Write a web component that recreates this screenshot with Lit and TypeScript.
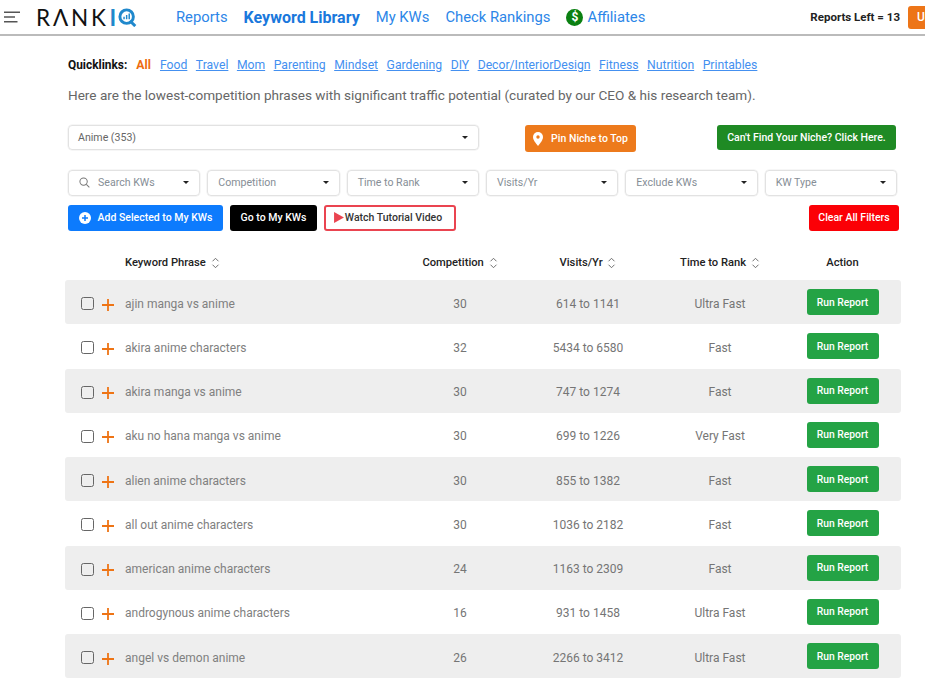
import { LitElement, html, css, svg } from "lit";
import { customElement } from "lit/decorators.js";

const QUICKLINKS = ["Food", "Travel", "Mom", "Parenting", "Mindset", "Gardening", "DIY", "Decor/InteriorDesign", "Fitness", "Nutrition", "Printables"];
const FILTERS = ["Search KWs", "Competition", "Time to Rank", "Visits/Yr", "Exclude KWs", "KW Type"];
const ROWS = [
  ["ajin manga vs anime", "30", "614 to 1141", "Ultra Fast"],
  ["akira anime characters", "32", "5434 to 6580", "Fast"],
  ["akira manga vs anime", "30", "747 to 1274", "Fast"],
  ["aku no hana manga vs anime", "30", "699 to 1226", "Very Fast"],
  ["alien anime characters", "30", "855 to 1382", "Fast"],
  ["all out anime characters", "30", "1036 to 2182", "Fast"],
  ["american anime characters", "24", "1163 to 2309", "Fast"],
  ["androgynous anime characters", "16", "931 to 1458", "Ultra Fast"],
  ["angel vs demon anime", "26", "2266 to 3412", "Ultra Fast"],
];

const sortIcon = svg`<svg class="sort" viewBox="0 0 10 14" width="9" height="12" fill="none" stroke="#666" stroke-width="1.1"><path d="M1.5 5 5 1.5 8.500 5M1.500 9 5 12.500 8.500 9"/></svg>`;

@customElement("app-root")
export class AppRoot extends LitElement {
  static styles = css`
    :host {
      display: block;
      width: 925px;
      height: 681px;
      overflow: hidden;
      background: #fff;
      font-family: Roboto, "Liberation Sans", sans-serif;
      color: #757575;
    }
    header {
      display: flex;
      align-items: center;
      height: 34px;
      border-bottom: 2px solid #bbb;
      white-space: nowrap;
    }
    .burger { margin-left: 4px; width: 16px; }
    .burger, .logo, nav a { flex: none; }
    .logo {
      display: flex;
      align-items: center;
      margin-left: 16px;
      width: 102px;
      font-family: Lato, sans-serif;
      font-weight: 400;
      font-size: 22.5px;
      color: #111;
      letter-spacing: 2.8px;
    }
    .logo b { font-weight: 700; color: #2088cc; margin: 0 2px 0 1px; letter-spacing: 0; }
    .logo svg { flex: none; }
    nav { display: flex; align-items: center; gap: 16px; margin-left: 38px; font-size: 14.8px; }
    nav a { color: #2c86e8; }
    nav a.on { font-weight: 700; font-size: 16px; color: #1a78dc; }
    .aff { display: flex; align-items: center; gap: 4px; }
    .coin {
      width: 17px;
      height: 17px;
      border-radius: 50%;
      background: #0b8012;
      color: #fff;
      font-size: 12px;
      font-weight: 700;
      line-height: 17px;
      text-align: center;
    }
    .left { margin-left: auto; font-size: 11.5px; font-weight: 700; color: #222; }
    .up {
      flex: none;
      margin-left: 8px;
      margin-right: -30px;
      width: 47px;
      height: 23px;
      padding-left: 9px;
      box-sizing: border-box;
      border-radius: 3px;
      background: #ed7518;
      color: #fff;
      font-size: 12px;
      font-weight: 500;
      line-height: 23px;
    }
    main { padding: 22px 28px 0 68px; }
    .quick { display: flex; gap: 8.5px; font-size: 12.2px; line-height: 15px; color: #4490f0; }
    .quick b { color: #111; font-size: 11.9px; margin-right: 0.5px; }
    .quick strong { color: #ee6c10; margin-right: 0.5px; }
    .quick a { text-decoration: underline; }
    .lead { margin: 14px 0 0; font-size: 13.57px; line-height: 17px; color: #666; white-space: nowrap; }
    .niche { display: flex; align-items: flex-start; margin-top: 21px; height: 28px; }
    .select {
      display: flex;
      align-items: center;
      justify-content: space-between;
      box-sizing: border-box;
      height: 26px;
      padding: 0 10px 1px;
      border: 1px solid #e2e2e2;
      border-radius: 4px;
      font-size: 10.6px;
      color: #868e96;
      box-shadow: 0 0 0 0.5px #eee;
    }
    .select.big { width: 411px; height: 25px; padding-left: 9px; color: #666; }
    .select i { width: 0; height: 0; border: 3px solid transparent; border-top: 3.5px solid #222; border-bottom: 0; }
    .filters { display: grid; grid-template-columns: repeat(6, 1fr); gap: 7px; margin-top: 17px; }
    .search { flex: 1; display: flex; align-items: center; gap: 8px; }
    .search svg { flex: none; }
    .btn {
      display: inline-flex;
      align-items: center;
      justify-content: center;
      box-sizing: border-box;
      border-radius: 3px;
      color: #fff;
      font-size: 10.5px;
      font-weight: 500;
      white-space: nowrap;
    }
    .pin { width: 111px; height: 27px; margin-left: 46px; background: #ed7a1c; gap: 8px; }
    .cant { width: 179px; height: 25px; margin-left: auto; margin-right: 1px; background: #1f8a24; }
    .actions { display: flex; gap: 7px; margin-top: 9px; margin-right: -2px; }
    .actions .btn { height: 26px; padding-bottom: 1px; }
    .add { width: 155px; background: #0d7bfd; gap: 7px; }
    .go { width: 87px; background: #000; }
    .watch { width: 132px; background: #fff; border: 2px solid #ea4450; color: #333; gap: 1px; padding-right: 4px; }
    .clear { width: 90px; margin-left: auto; background: #fb0006; }
    .table { margin: 0 -4px 0 -3px; }
    .row {
      display: grid;
      grid-template-columns: 60px 275px 120px 136px 128px 117px;
      align-items: center;
      box-sizing: border-box;
      height: 44.25px;
      padding-top: 3px;
      border-radius: 3px;
      font-size: 12px;
    }
    .row > div { text-align: center; }
    .row > .kw { text-align: left; color: #808080; }
    .head { height: 49px; padding-top: 14px; font-weight: 500; font-size: 11.2px; color: #222; }
    .head > .kw { color: #222; }
    .head .sort { vertical-align: -2.5px; margin-left: 2px; }
    .row.even { background: #eee; }
    .tick { display: flex; align-items: center; padding-left: 16px; gap: 8px; }
    .box { width: 11px; height: 11px; border: 1.5px solid #666; border-radius: 2.5px; }
    .plus { margin-top: 2px; }
    .run { width: 72px; height: 26px; margin-top: -3px; background: #24a345; font-size: 10.3px; }
  `;

  render() {
    return html`
      <header>
        <svg class="burger" viewBox="0 0 16 12" height="12">
          <path d="M0 1.200h16M0 6h11M0 10.800h13.500" stroke="#555" stroke-width="1.600"/>
        </svg>
        <div class="logo">
          RΛNK<b>I</b>
          <svg viewBox="0 0 22 22" width="19" height="19">
            <circle cx="10" cy="10" r="7.800" fill="none" stroke="#2088cc" stroke-width="3.400"/>
            <path d="M14 15l6 6" stroke="#2088cc" stroke-width="3.400"/>
            <path d="M7 10v3M10 8v5M13 6.500v6.500" stroke="#2088cc" stroke-width="1.700"/>
          </svg>
        </div>
        <nav>
          <a>Reports</a>
          <a class="on">Keyword Library</a>
          <a>My KWs</a>
          <a>Check Rankings</a>
          <a class="aff"><span class="coin">$</span>Affiliates</a>
        </nav>
        <span class="left">Reports Left = 13</span>
        <span class="up">Upgrade</span>
      </header>
      <main>
        <div class="quick">
          <b>Quicklinks:</b>
          <strong>All</strong>
          ${QUICKLINKS.map((q) => html`<a>${q}</a>`)}
        </div>
        <p class="lead">Here are the lowest-competition phrases with significant traffic potential (curated by our CEO &amp; his research team).</p>
        <div class="niche">
          <div class="select big">Anime (353)<i></i></div>
          <div class="btn pin">
            <svg viewBox="0 0 10 14" width="10" height="14">
              <path d="M5 0a5 5 0 0 1 5 5c0 3.500-5 9-5 9S0 8.500 0 5a5 5 0 0 1 5-5z" fill="#fff"/>
              <circle cx="5" cy="5" r="1.700" fill="#ed7a1c"/>
            </svg>
            Pin Niche to Top
          </div>
          <div class="btn cant">Can't Find Your Niche? Click Here.</div>
        </div>
        <div class="filters">
          ${FILTERS.map((f, i) => html`
            <div class="select">
              ${i === 0
                ? html`<span class="search">
                    <svg viewBox="0 0 12 12" width="11" height="11" fill="none" stroke="#777" stroke-width="1.100"><circle cx="5" cy="5" r="4"/><path d="M8 8l3.300 3.300"/></svg>
                    ${f}
                  </span>`
                : f}
              <i></i>
            </div>`)}
        </div>
        <div class="actions">
          <div class="btn add">
            <svg viewBox="0 0 12 12" width="12" height="12">
              <circle cx="6" cy="6" r="6" fill="#fff"/>
              <path d="M6 3v6M3 6h6" stroke="#0d7bfd" stroke-width="1.500"/>
            </svg>
            Add Selected to My KWs
          </div>
          <div class="btn go">Go to My KWs</div>
          <div class="btn watch">
            <svg viewBox="0 0 9 10" width="10" height="11"><path d="M0 0l9 5-9 5z" fill="#ea4450"/></svg>
            Watch Tutorial Video
          </div>
          <div class="btn clear">Clear All Filters</div>
        </div>
        <div class="table">
          <div class="row head">
            <div></div>
            <div class="kw">Keyword Phrase ${sortIcon}</div>
            <div>Competition ${sortIcon}</div>
            <div>Visits/Yr ${sortIcon}</div>
            <div>Time to Rank ${sortIcon}</div>
            <div>Action</div>
          </div>
          ${ROWS.map((r, i) => html`
            <div class="row ${i % 2 === 0 ? "even" : ""}">
              <div class="tick">
                <span class="box"></span>
                <svg class="plus" viewBox="0 0 12 12" width="12" height="12"><path d="M6 0v12M0 6h12" stroke="#ee7415" stroke-width="1.800"/></svg>
              </div>
              <div class="kw">${r[0]}</div>
              <div>${r[1]}</div>
              <div>${r[2]}</div>
              <div>${r[3]}</div>
              <div><span class="btn run">Run Report</span></div>
            </div>`)}
        </div>
      </main>
    `;
  }
}
